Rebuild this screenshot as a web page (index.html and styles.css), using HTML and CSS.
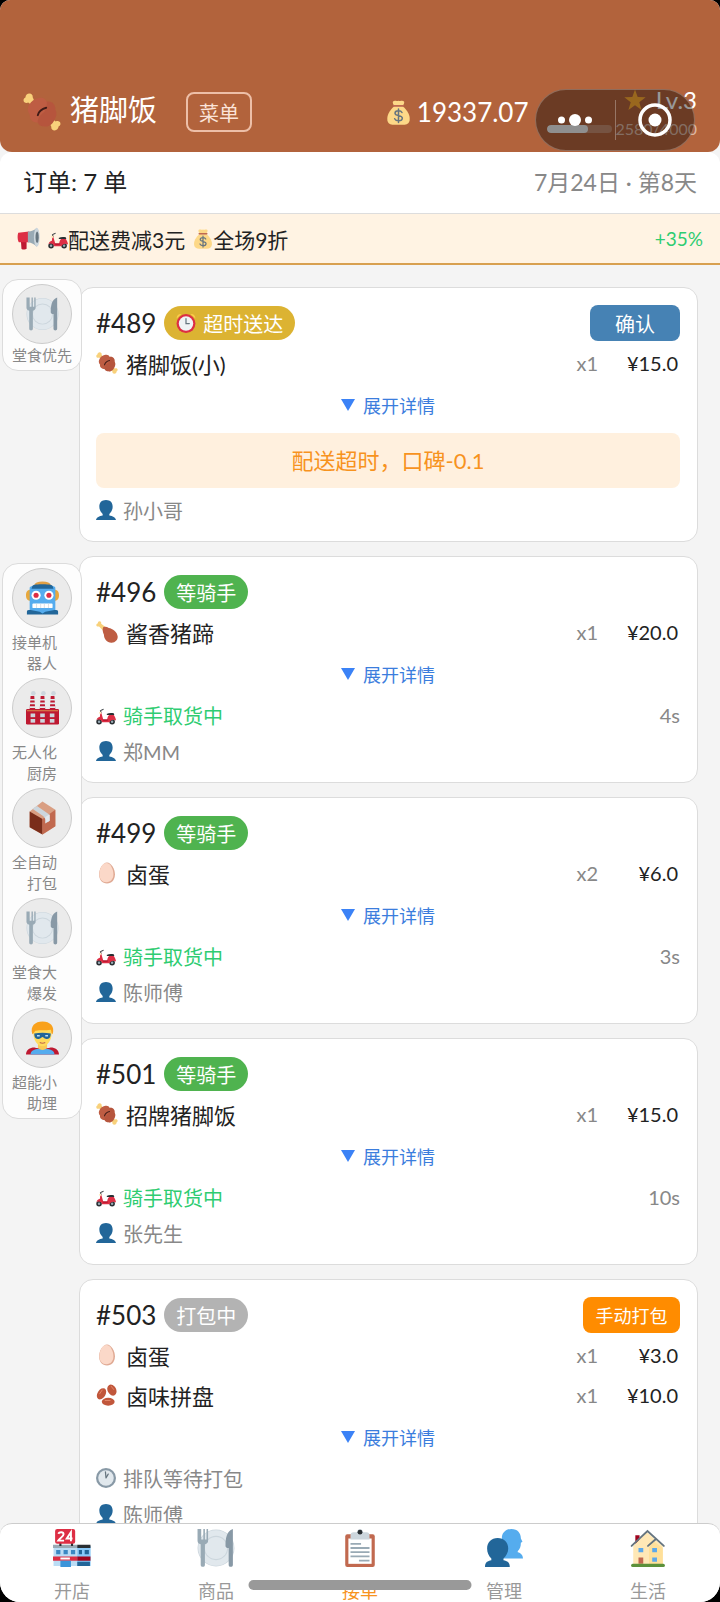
FILE: index.html
```html
<!DOCTYPE html>
<html lang="zh-CN">
<head>
  <meta charset="UTF-8">
  <meta name="viewport" content="width=device-width, initial-scale=1">
  <title>猪脚饭</title>
  <link rel="stylesheet" href="styles.css">
</head>
<body>
  <!-- Icon sprite -->
  <svg class="sprite" aria-hidden="true">
    <symbol id="i-meat" viewBox="0 0 36 36">
      <path d="M9 12L5 9C3 10 .5 9 .5 6.800.5 5.500 1.300 4.600 2.300 4.200 2.500 2 4 .5 6 .5c2.300 0 3.500 1.700 3.200 3.500l1 2.500L14 9zM27 24l4 3c2-1 4.500 0 4.500 2.200 0 1.300-.8 2.200-1.800 2.600-.2 2.200-1.700 3.700-3.700 3.700-2.300 0-3.500-1.700-3.200-3.500l-1-2.500L22 27z" fill="#f8d17b"/>
      <path d="M14 5c4-1.500 7 0 8.500 3 5-.5 8.500 3 8 7.500 2 4 1 7.500-1 10.500-2 4-5.500 6.500-9.500 5.500-2.500.5-5-1-6-3.500-4.500 0-8-3-7.500-7.500C4 17.500 4 14 6 11c2-3 4.500-5.500 8-6z" fill="#be5d43"/>
      <path d="M22.500 8c5-.5 8.500 3 8 7.500 2 4 1 7.500-1 10.500-2 4-5.500 6.500-9.500 5.500-2.500.5-5-1-6-3.500-.5-3 2-7 5-9s4-7 3.500-11z" fill="#aa4a35" opacity=".4"/>
      <path d="M14 21c1-3.500 4-6 8-7" stroke="#401b17" stroke-width="1.800" stroke-linecap="round" fill="none"/>
    </symbol>
    <symbol id="i-leg" viewBox="0 0 36 36">
      <path d="M6 .5c2 0 3 2 2.500 4L18 12l-5 5L5 9C2.500 9.500.5 8.500.5 6.500c0-1.500 1-2.500 2.500-2.500C3 2 4 .5 6 .5z" fill="#f8d17b"/>
      <path d="M12 10c3-1.500 6-.5 9 1.500 6 1 14 6.500 14.500 14 .3 6-4.500 10.500-10.500 10-7-.5-12-6-12-13-2-3.500-3-9-1-12.500z" fill="#be5d43"/>
    </symbol>
    <symbol id="i-egg" viewBox="0 0 36 36">
      <path d="M18 1c7 0 13 11 13 19 0 9-5 15-13 15S5 29 5 20C5 12 11 1 18 1z" fill="#e0aa94"/>
      <path d="M17 1.500c7 0 11.500 11 11.500 18.500S24 33 17 33 5.500 28 5.500 20 10 1.500 17 1.500z" fill="#fbd8c8"/>
    </symbol>
    <symbol id="i-beans" viewBox="0 0 36 36">
      <g fill="#c1573b">
        <ellipse cx="9" cy="16" rx="10" ry="6.500" transform="rotate(-58 9 16)"/>
        <ellipse cx="26" cy="10" rx="9.500" ry="7" transform="rotate(62 26 10)"/>
        <ellipse cx="20" cy="29" rx="10.500" ry="6.500"/>
      </g>
      <g fill="none" stroke="#e58a6c" stroke-width="1.500" stroke-linecap="round">
        <path d="M6 16l4-6M25 4l4 5M15 27h8"/>
      </g>
    </symbol>
    <symbol id="i-bag" viewBox="0 0 36 36">
      <path d="M12 9h12c7 6 11 13 10 20-1 5-4 6.500-9 6.500H11c-5 0-8-1.500-9-6.500C1 22 5 15 12 9z" fill="#fdd888"/>
      <path d="M10 2c3-2 4 0 8-1 4 1 5-1 8 1 1 2-1 5-2.500 7h-11C11 7 9 4 10 2z" fill="#fdd888"/>
      <path d="M11 8.500h14" stroke="#bf6952" stroke-width="2.400" stroke-linecap="round"/>
      <path d="M23 18c-1-2-3-2.500-5-2.500-3 0-5 1.200-5 3.500 0 4.500 10.500 2.500 10.500 7 0 2.500-2.500 4-5.500 4-2.500 0-4.500-1-5.500-3M18 13v19.500" fill="none" stroke="#67757f" stroke-width="2.200" stroke-linecap="round"/>
    </symbol>
    <symbol id="i-horn" viewBox="0 0 36 36">
      <path d="M6 20h9v14c0 1-8 2-8 0z" fill="#be1931"/>
      <path d="M2 9l17-2v17L3 24c-2.500-3-2.500-12-1-15z" fill="#dd2e44"/>
      <path d="M17 7c6 0 10-2 14-6v30c-4-4-8-6.500-14-7z" fill="#99aab5"/>
      <ellipse cx="31" cy="16" rx="4.500" ry="15" fill="#ccd6dd"/>
      <ellipse cx="31.500" cy="16" rx="2.500" ry="9" fill="#66757f"/>
    </symbol>
    <symbol id="i-scooter" viewBox="0 0 36 36">
      <circle cx="5.500" cy="30" r="5" fill="#292f33"/><circle cx="29" cy="30" r="5" fill="#292f33"/>
      <circle cx="5.500" cy="30" r="2.200" fill="#99aab5"/><circle cx="29" cy="30" r="2.200" fill="#99aab5"/>
      <path d="M9 12l4 14h7c1-5 2-7 4-8h8c2 3 4 7 4 10-3-2.500-9-2.500-12 3H11c-1-4-5-6-10-4 0-3 3-5 6-6l1-9z" fill="#dd2e44"/>
      <path d="M12 26h9v2h-8z" fill="#a0041e"/>
      <path d="M19 16c4-2 9-2 13-1l1 3H20z" fill="#292f33"/>
      <path d="M9 13l-1-3 5-2" fill="none" stroke="#292f33" stroke-width="1.800" stroke-linecap="round"/>
      <circle cx="7.500" cy="14" r="2" fill="#ffe8b6"/>
    </symbol>
    <symbol id="i-alarm" viewBox="0 0 36 36">
      <path d="M1 10c0-5 4-9 9-8zM35 10c0-5-4-9-9-8z" fill="#ffcc4d"/>
      <circle cx="18" cy="19" r="17" fill="#dd2e44"/><circle cx="18" cy="19" r="13" fill="#f0f3f5"/>
      <path d="M18 10v9h6" fill="none" stroke="#66757f" stroke-width="2.200" stroke-linecap="round"/>
    </symbol>
    <symbol id="i-clock" viewBox="0 0 36 36">
      <circle cx="18" cy="18" r="18" fill="#8899a6"/><circle cx="18" cy="18" r="14" fill="#e1e8ed"/>
      <path d="M17 7l1 11 4-7" fill="none" stroke="#66757f" stroke-width="2.200" stroke-linecap="round" stroke-linejoin="round"/>
    </symbol>
    <symbol id="i-person" viewBox="0 0 36 36">
      <path d="M18 0c8 0 12 5 12 12 0 6-3 10-6 13v3c6 1 11 3 12 8H0c1-5 6-7 12-8v-3c-3-3-6-7-6-13C6 5 10 0 18 0z" fill="#226699"/>
    </symbol>
    <symbol id="i-plate" viewBox="0 0 36 36">
      <circle cx="18" cy="18" r="17.500" fill="#ccd6dd"/><circle cx="18" cy="18" r="16.800" fill="#e1e8ed"/>
      <circle cx="18" cy="18" r="11.500" fill="#ccd6dd"/><circle cx="18" cy="18" r="10.500" fill="#e1e8ed"/>
      <path d="M.5 0v11c0 2 1 3 3 3.500V34c0 2.500 4 2.500 4 0V14.500c2-.5 3-1.500 3-3.500V0H9v10H7.500V0H6v10H4V0z" fill="#99aab5"/>
      <path d="M34 0c-6 2-7 9-7 16 0 1 1 2 3 2v16c0 2.500 4 2.500 4 0z" fill="#8899a6"/>
    </symbol>
    <symbol id="i-robot" viewBox="0 0 36 36">
      <ellipse cx="18" cy="4" rx="9" ry="4" fill="#e0a045"/>
      <path d="M5 9C1 9 0 12 0 15s1 6 5 6zM31 9c4 0 5 3 5 6s-1 6-5 6z" fill="#e8a83c"/>
      <path d="M4 7c0-2 4-3 14-3s14 1 14 3v24H4z" fill="#55acee"/>
      <path d="M7 5c0-1 3-2 11-2s11 1 11 2l1 3H6z" fill="#226699"/>
      <circle cx="11" cy="15" r="5" fill="#fff"/><circle cx="25" cy="15" r="5" fill="#fff"/>
      <circle cx="11" cy="15" r="2.800" fill="#dd2e44"/><circle cx="25" cy="15" r="2.800" fill="#dd2e44"/>
      <rect x="7" y="24" width="22" height="5" rx="1" fill="#fff"/>
      <path d="M11.500 24v5M16 24v5M20 24v5M24.500 24v5" stroke="#ccd6dd" stroke-width=".8"/>
      <path d="M1 33c0-2 1-2 4-2h26c3 0 4 0 4 2v3H1z" fill="#226699"/>
      <path d="M5 30h26v1l-10 2-3 2-3-2-10-2z" fill="#55acee"/>
    </symbol>
    <symbol id="i-factory" viewBox="0 0 36 36">
      <g fill="#be1931"><path d="M5 5h4l1 14H4zM16 5h4l1 14h-6zM27 5h4l1 14h-6z"/></g>
      <path d="M4 9h6M4 13h6M4 17h6M15 9h6M15 13h6M15 17h6M26 9h6M26 13h6M26 17h6" stroke="#e1e8ed" stroke-width="1.800"/>
      <g fill="#ccd6dd"><circle cx="8" cy="2" r="2.500"/><circle cx="19" cy="2" r="2.500"/><circle cx="30" cy="2" r="2.500"/></g>
      <rect x="0" y="19" width="36" height="17" rx="1.500" fill="#be1931"/>
      <path d="M1 21h34" stroke="#e09a50" stroke-width="1"/>
      <g fill="#ccd6dd"><rect x="5" y="24" width="5" height="4"/><rect x="15.500" y="24" width="5" height="4"/><rect x="26" y="24" width="5" height="4"/><rect x="5" y="30" width="5" height="4"/><rect x="15.500" y="30" width="5" height="4"/><rect x="26" y="30" width="5" height="4"/></g>
    </symbol>
    <symbol id="i-box" viewBox="0 0 36 36">
      <path d="M18 0l14 9v18L18 36 4 28V11z" fill="#d99e82"/>
      <path d="M4 11l14 8v17L4 28z" fill="#7a2d1a"/>
      <path d="M18 19l14-10v18l-14 9z" fill="#c1694f"/>
      <path d="M7 8l5-3 13 9v8l-4-3-2-3z" fill="#ccd6dd"/>
      <path d="M21 17l5-3v7l-5 3z" fill="#e1e8ed"/>
    </symbol>
    <symbol id="i-hero" viewBox="0 0 36 36">
      <path d="M0 36c0-5 5-8 10-7.500l8 1.500 8-1.500C31 28 36 31 36 36z" fill="#be1931"/>
      <path d="M5 36c0-4 3-5 7-6h12c4 1 7 2 7 6z" fill="#55acee"/>
      <path d="M13 22h10v6c-2 4-8 4-10 0z" fill="#f9ca55"/>
      <path d="M8 12c0-7 5-11 10-11s10 4 10 11c0 9-5 15-10 15S8 21 8 12z" fill="#ffdc5d"/>
      <path d="M7 14C4 5 10 0 18 0s14 5 11 14c-2-1-1-3-2-5-6 1-12 0-16 1-2 0-2 3-4 4z" fill="#f9a11b"/>
      <path d="M9 13c6-1 12-1 18 0 0 5-2 6-5 6-2 0-3-2-4-2s-2 2-4 2c-3 0-5-1-5-6z" fill="#226699"/>
      <path d="M12 15.500h3M21 15.500h3" stroke="#bbddf5" stroke-width="1.500"/>
      <path d="M15 23c2 1 4 1 6 0" stroke="#c1694f" stroke-width="1.300" fill="none"/>
    </symbol>
    <symbol id="i-shop" viewBox="0 0 36 36">
      <path d="M.5 16h35v19H.5z" fill="#bbddf5"/><path d="M23 16h12.500v19H23z" fill="#88c9f9"/>
      <path d="M0 15h23v3H0z" fill="#99aab5"/><path d="M23 15h12.500v3H23z" fill="#292f33"/>
      <path d="M3 20h4v4H3zM10 20h4v4h-4zM17 20h4v4h-4z" fill="#3b88c3"/><path d="M24.500 20h3v4h-3zM30 20h4v4h-4z" fill="#226699"/>
      <path d="M0 26h23v4H0z" fill="#dd2e44"/><path d="M23 26h12.500v4H23z" fill="#a0041e"/>
      <path d="M7 28h9" stroke="#fff" stroke-width="2"/>
      <path d="M7 30h10v6H7z" fill="#3b94d9"/><path d="M23 31h12v4H23z" fill="#226699"/>
      <path d="M6 13h2v3H6zM17 13h2v3h-2z" fill="#292f33"/>
      <rect x="2" y="0" width="19" height="14" rx="2" fill="#dd2e44"/>
      <path d="M5 4.500c1-2 5-2 5 .5 0 2-3 3-5 6h5.500M17 11.500V3l-4 6h5.500" fill="none" stroke="#fff" stroke-width="1.800"/>
    </symbol>
    <symbol id="i-board" viewBox="0 0 36 36">
      <rect x="4" y="5" width="28" height="31" rx="2" fill="#c1694f"/>
      <path d="M7 9h22v24H7z" fill="#fff"/>
      <path d="M9 10V6c0-2 1-3 3-3h3c1-4 5-4 6 0h3c2 0 3 1 3 3v4z" fill="#ccd6dd"/>
      <circle cx="18" cy="3" r="2.300" fill="#292f33"/>
      <path d="M9 14h10M9 18h18M9 22h18M9 26h18M17 30h10" stroke="#99aab5" stroke-width="1.700"/>
    </symbol>
    <symbol id="i-people" viewBox="0 0 36 36">
      <path d="M25 0c6 0 9 4 9 9l1.500 3-1.500 1c0 4-1 6-3 8v1c3 .5 5 3 5 6H16V7c1-4 4-7 9-7z" fill="#55acee"/>
      <path d="M12 8.500c6 0 10 4 10 10 0 4-2 7-4.500 9.500v1.500c3.500.5 6 2 6 6.500H0c0-4.500 2.500-6 6-6.500V28C3.500 25.500 2 22.500 2 18.500c0-6 4-10 10-10z" fill="#226699"/>
    </symbol>
    <symbol id="i-house" viewBox="0 0 36 36">
      <path d="M6 6h4v8H6z" fill="#a0041e"/>
      <path d="M4 16L17 3l15 13v18H4z" fill="#ffe8b6"/>
      <path d="M19 17l5-5 8 6v16H19z" fill="#ffe09a"/>
      <path d="M2.500 16L17.500 2 33 16M18 16l7-6" fill="none" stroke="#66757f" stroke-width="1.800" stroke-linecap="round"/>
      <path d="M9 18h4.500v4H9zM22 18h4.500v4H22zM22 27h4.500v4H22z" fill="#5da9ea"/>
      <path d="M9 27h4.500v6H9z" fill="#c1694f"/>
      <rect x="2" y="33" width="32" height="3" rx="1.500" fill="#5c913b"/>
    </symbol>
    <symbol id="i-star" viewBox="0 0 36 36">
      <path d="M18 1l4.400 12.200L35.500 13.500 25 21.500l3.800 12.700L18 26.700 7.200 34.200 11 21.500.5 13.500l13.100-.3z" fill="#ffac33"/>
    </symbol>
  </svg>

  <div class="app">
    <header class="header">
      <svg class="logo"><use href="#i-meat"/></svg>
      <h1 class="title">猪脚饭</h1>
      <button class="menu-btn" type="button">菜单</button>
      <div class="money">
        <svg class="money-icon"><use href="#i-bag"/></svg>
        <span>19337.07</span>
      </div>
      <div class="level">
        <div class="level-name"><svg class="star"><use href="#i-star"/></svg>Lv.3</div>
        <div class="xp">
          <div class="xp-bar"><div class="xp-fill" style="width: 64%"></div></div>
          <span>2580/4000</span>
        </div>
      </div>
      <!-- Mini-program capsule -->
      <div class="capsule">
        <button class="capsule-btn" type="button" aria-label="更多">
          <svg class="dots" viewBox="0 0 34 12"><circle cx="3.500" cy="6" r="3.500"/><circle cx="17" cy="6" r="6"/><circle cx="30.500" cy="6" r="3.500"/></svg>
        </button>
        <button class="capsule-btn capsule-close" type="button" aria-label="关闭">
          <svg class="target" viewBox="0 0 34 34"><circle cx="17" cy="17" r="15" fill="none" stroke="#fff" stroke-width="3.500"/><circle cx="17" cy="17" r="6.500" fill="#fff"/></svg>
        </button>
      </div>
    </header>

    <div class="info">
      <span>订单: 7 单</span>
      <span class="date">7月24日 · 第8天</span>
    </div>

    <div class="promo">
      <svg class="promo-icon horn"><use href="#i-horn"/></svg>
      <svg class="promo-icon"><use href="#i-scooter"/></svg>
      <span class="promo-text">配送费减3元</span>
      <svg class="promo-icon"><use href="#i-bag"/></svg>
      <span>全场9折</span>
      <span class="rate">+35%</span>
    </div>

    <main class="main">
      <div class="orders">
        <article class="card">
          <div class="card-head">
            <h2 class="order-no">#489</h2>
            <span class="badge late"><svg class="badge-icon"><use href="#i-alarm"/></svg>超时送达</span>
            <button class="action confirm" type="button">确认</button>
          </div>
          <div class="item"><svg class="item-icon"><use href="#i-meat"/></svg><span>猪脚饭(小)</span><span class="qty">x1</span><span class="price">¥15.0</span></div>
          <button class="expand" type="button"><span class="tri"></span>展开详情</button>
          <p class="alert">配送超时，口碑-0.1</p>
          <div class="line"><svg class="line-icon"><use href="#i-person"/></svg>孙小哥</div>
        </article>

        <article class="card">
          <div class="card-head">
            <h2 class="order-no">#496</h2>
            <span class="badge wait">等骑手</span>
          </div>
          <div class="item"><svg class="item-icon"><use href="#i-leg"/></svg><span>酱香猪蹄</span><span class="qty">x1</span><span class="price">¥20.0</span></div>
          <button class="expand" type="button"><span class="tri"></span>展开详情</button>
          <div class="line rider"><svg class="line-icon"><use href="#i-scooter"/></svg>骑手取货中<span class="time">4s</span></div>
          <div class="line"><svg class="line-icon"><use href="#i-person"/></svg>郑MM</div>
        </article>

        <article class="card">
          <div class="card-head">
            <h2 class="order-no">#499</h2>
            <span class="badge wait">等骑手</span>
          </div>
          <div class="item"><svg class="item-icon"><use href="#i-egg"/></svg><span>卤蛋</span><span class="qty">x2</span><span class="price">¥6.0</span></div>
          <button class="expand" type="button"><span class="tri"></span>展开详情</button>
          <div class="line rider"><svg class="line-icon"><use href="#i-scooter"/></svg>骑手取货中<span class="time">3s</span></div>
          <div class="line"><svg class="line-icon"><use href="#i-person"/></svg>陈师傅</div>
        </article>

        <article class="card">
          <div class="card-head">
            <h2 class="order-no">#501</h2>
            <span class="badge wait">等骑手</span>
          </div>
          <div class="item"><svg class="item-icon"><use href="#i-meat"/></svg><span>招牌猪脚饭</span><span class="qty">x1</span><span class="price">¥15.0</span></div>
          <button class="expand" type="button"><span class="tri"></span>展开详情</button>
          <div class="line rider"><svg class="line-icon"><use href="#i-scooter"/></svg>骑手取货中<span class="time">10s</span></div>
          <div class="line"><svg class="line-icon"><use href="#i-person"/></svg>张先生</div>
        </article>

        <article class="card">
          <div class="card-head">
            <h2 class="order-no">#503</h2>
            <span class="badge packing">打包中</span>
            <button class="action pack" type="button">手动打包</button>
          </div>
          <div class="item"><svg class="item-icon"><use href="#i-egg"/></svg><span>卤蛋</span><span class="qty">x1</span><span class="price">¥3.0</span></div>
          <div class="item"><svg class="item-icon"><use href="#i-beans"/></svg><span>卤味拼盘</span><span class="qty">x1</span><span class="price">¥10.0</span></div>
          <button class="expand" type="button"><span class="tri"></span>展开详情</button>
          <div class="line"><svg class="line-icon"><use href="#i-clock"/></svg>排队等待打包</div>
          <div class="line"><svg class="line-icon"><use href="#i-person"/></svg>陈师傅</div>
        </article>
      </div>

      <!-- Floating skills -->
      <aside class="rail">
        <div class="panel single">
          <button class="skill" type="button"><span class="disc"><svg class="skill-icon"><use href="#i-plate"/></svg></span><span class="skill-name">堂食优先</span></button>
        </div>
        <div class="panel">
          <button class="skill" type="button"><span class="disc"><svg class="skill-icon"><use href="#i-robot"/></svg></span><span class="skill-name">接单机<br>器人</span></button>
          <button class="skill" type="button"><span class="disc"><svg class="skill-icon"><use href="#i-factory"/></svg></span><span class="skill-name">无人化<br>厨房</span></button>
          <button class="skill" type="button"><span class="disc"><svg class="skill-icon"><use href="#i-box"/></svg></span><span class="skill-name">全自动<br>打包</span></button>
          <button class="skill" type="button"><span class="disc"><svg class="skill-icon"><use href="#i-plate"/></svg></span><span class="skill-name">堂食大<br>爆发</span></button>
          <button class="skill" type="button"><span class="disc"><svg class="skill-icon"><use href="#i-hero"/></svg></span><span class="skill-name">超能小<br>助理</span></button>
        </div>
      </aside>
    </main>

    <nav class="tabs">
      <a class="tab" href="#"><svg class="tab-icon"><use href="#i-shop"/></svg>开店</a>
      <a class="tab" href="#"><svg class="tab-icon"><use href="#i-plate"/></svg>商品</a>
      <a class="tab active" href="#"><svg class="tab-icon"><use href="#i-board"/></svg>接单</a>
      <a class="tab" href="#"><svg class="tab-icon"><use href="#i-people"/></svg>管理</a>
      <a class="tab" href="#"><svg class="tab-icon"><use href="#i-house"/></svg>生活</a>
      <div class="home-bar"></div>
    </nav>
  </div>
</body>
</html>
```
FILE: styles.css
```css
* {
  box-sizing: border-box;
}

body {
  margin: 0;
  background: #000;
  color: #222;
  font-family: Lato, "Noto Sans CJK SC", sans-serif;
  font-size: 20px;
}

button {
  padding: 0;
  border: none;
  background: none;
  font-family: inherit;
  cursor: pointer;
}

h1, h2, p {
  margin: 0;
  font-weight: 400;
}

svg {
  display: block;
  flex: none;
}

.sprite {
  position: absolute;
  width: 0;
  height: 0;
}

.app {
  display: flex;
  flex-direction: column;
  height: 100vh;
  overflow: hidden;
  background: #f4f4f4;
  border-radius: 10px 10px 20px 20px;
}

/* header */
.header {
  position: relative;
  display: flex;
  align-items: center;
  height: 152px;
  padding: 72px 23px 0;
  background: #b2633c;
  border-radius: 0 0 12px 12px;
  color: #fff;
}

.logo {
  width: 38px;
  height: 38px;
  margin-right: 9px;
}

.title {
  font-size: 29px;
  line-height: 38px;
  padding-bottom: 4px;
}

.menu-btn {
  width: 66px;
  height: 40px;
  margin-left: 29px;
  border: 2px solid #edbfa8;
  border-radius: 8px;
  color: #fbe3d8;
  font-size: 20px;
}

.money {
  display: flex;
  align-items: center;
  gap: 6px;
  margin-left: auto;
  font-size: 26px;
}

.money-icon {
  width: 25px;
  height: 27px;
}

.level {
  display: flex;
  flex-direction: column;
  align-items: flex-end;
  gap: 5px;
  margin-left: 18px;
}

.level-name {
  display: flex;
  align-items: center;
  gap: 10px;
  font-size: 24px;
  line-height: 28px;
}

.star {
  width: 22px;
  height: 22px;
}

.xp {
  display: flex;
  align-items: center;
  gap: 4px;
  color: #dcb8a5;
  font-size: 16px;
  line-height: 20px;
}

.xp-bar {
  width: 65px;
  height: 8px;
  overflow: hidden;
  background: #c58a6e;
  border-radius: 4px;
}

.xp-fill {
  height: 100%;
  background: #eee;
  border-radius: 4px;
}

.capsule {
  position: absolute;
  right: 25px;
  bottom: 1px;
  display: flex;
  align-items: center;
  width: 160px;
  height: 62px;
  background: rgba(0, 0, 0, 0.4);
  border: 1px solid rgba(255, 255, 255, 0.25);
  border-radius: 31px;
}

.capsule-btn {
  display: flex;
  flex: 1;
  align-items: center;
  justify-content: center;
  height: 40px;
}

.capsule-close {
  border-left: 1px solid rgba(255, 255, 255, 0.3);
}

.dots {
  width: 34px;
  height: 12px;
  fill: #fff;
}

.target {
  width: 34px;
  height: 34px;
}

/* info + promo */
.info {
  display: flex;
  align-items: center;
  justify-content: space-between;
  height: 62px;
  padding: 0 23px 4px;
  background: #fff;
  border-bottom: 1px solid #ddd;
  border-radius: 12px 12px 0 0;
  font-size: 24px;
}

.date {
  color: #888;
  font-size: 23px;
}

.promo {
  display: flex;
  align-items: center;
  height: 51px;
  padding: 0 17px;
  background: #fff3e3;
  border-bottom: 2px solid #d8a050;
}

.promo-icon {
  width: 20px;
  height: 20px;
}

.promo span {
  font-size: 21px;
}

.promo .horn {
  width: 23px;
  height: 23px;
  margin-right: 8px;
}

.promo-text {
  margin-right: 8px;
}

.promo .rate {
  margin-left: auto;
  color: #2ecc71;
  font-size: 19px;
}

/* orders */
.main {
  position: relative;
  flex: 1;
  min-height: 0;
  overflow: hidden;
}

.orders {
  display: flex;
  flex-direction: column;
  gap: 14px;
  padding: 22px 22px 22px 79px;
}

.card {
  padding: 17px 17px 12px 16px;
  background: #fff;
  border: 1px solid #dcdcdc;
  border-radius: 14px;
}

.card-head {
  display: flex;
  align-items: center;
  gap: 8px;
  height: 36px;
  margin-bottom: 2px;
}

.order-no {
  font-size: 26px;
}

.badge {
  display: flex;
  align-items: center;
  gap: 7px;
  height: 34px;
  padding: 0 12px;
  border-radius: 17px;
  color: #fff;
}

.badge-icon {
  width: 20px;
  height: 20px;
}

.late {
  background: #dcb332;
}

.wait {
  background: #4fb34f;
}

.packing {
  background: #b3b3b3;
}

.action {
  height: 36px;
  margin-left: auto;
  border-radius: 8px;
  color: #fff;
}

.confirm {
  width: 90px;
  background: #4682b4;
  font-size: 20px;
}

.pack {
  width: 97px;
  background: #ff8c00;
  font-size: 18px;
}

.item {
  display: flex;
  align-items: center;
  height: 40px;
  padding-right: 2px;
  font-size: 22px;
}

.item-icon {
  width: 22px;
  height: 22px;
  margin-right: 8px;
}

.qty {
  margin-left: auto;
  color: #888;
  font-size: 20px;
}

.price {
  width: 80px;
  font-size: 20px;
  text-align: right;
}

.expand {
  display: flex;
  align-items: center;
  justify-content: center;
  gap: 8px;
  width: 100%;
  height: 46px;
  padding-bottom: 2px;
  color: #3b7ddd;
  font-size: 18px;
}

.tri {
  border: 7px solid transparent;
  border-top: 12px solid #3b82f6;
  border-bottom: none;
}

.alert {
  margin: 4px 0 5px;
  background: #fff0de;
  border-radius: 8px;
  color: #f7931e;
  font-size: 22px;
  line-height: 55px;
  text-align: center;
}

.line {
  display: flex;
  align-items: center;
  height: 36px;
  padding-bottom: 2px;
  color: #888;
}

.line-icon {
  width: 20px;
  height: 20px;
  margin-right: 7px;
}

.rider {
  color: #2ecc71;
}

.time {
  margin-left: auto;
  color: #888;
}

/* floating skills */
.rail {
  position: absolute;
  top: 14px;
  left: 2px;
  display: flex;
  flex-direction: column;
  gap: 192px;
}

.panel {
  display: flex;
  flex-direction: column;
  gap: 4px;
  width: 80px;
  padding: 4px 9px;
  background: #fdfdfd;
  border: 1px solid #dcdcdc;
  border-radius: 16px;
}

.skill {
  display: flex;
  flex-direction: column;
  align-items: flex-start;
  gap: 4px;
  color: #888;
  font-size: 15px;
  line-height: 21px;
  text-align: right;
}

.single .skill {
  gap: 1px;
}

.disc {
  display: flex;
  align-items: center;
  justify-content: center;
  width: 60px;
  height: 60px;
  background: #ebebeb;
  border: 1px solid #ccc;
  border-radius: 50%;
}

.skill-icon {
  width: 33px;
  height: 34px;
}

/* tab bar */
.tabs {
  position: relative;
  display: flex;
  height: 79px;
  background: #fff;
  border-top: 1px solid #ccc;
  border-radius: 12px 12px 0 0;
}

.tab {
  display: flex;
  flex: 1;
  flex-direction: column;
  align-items: center;
  gap: 10px;
  padding-top: 5px;
  color: #999;
  font-size: 18px;
  text-decoration: none;
}

.tab-icon {
  width: 38px;
  height: 38px;
}

.active {
  color: #f7931e;
}

.home-bar {
  position: absolute;
  bottom: 12px;
  left: 50%;
  width: 223px;
  height: 10px;
  background: #999;
  border-radius: 5px;
  transform: translateX(-50%);
}
```
